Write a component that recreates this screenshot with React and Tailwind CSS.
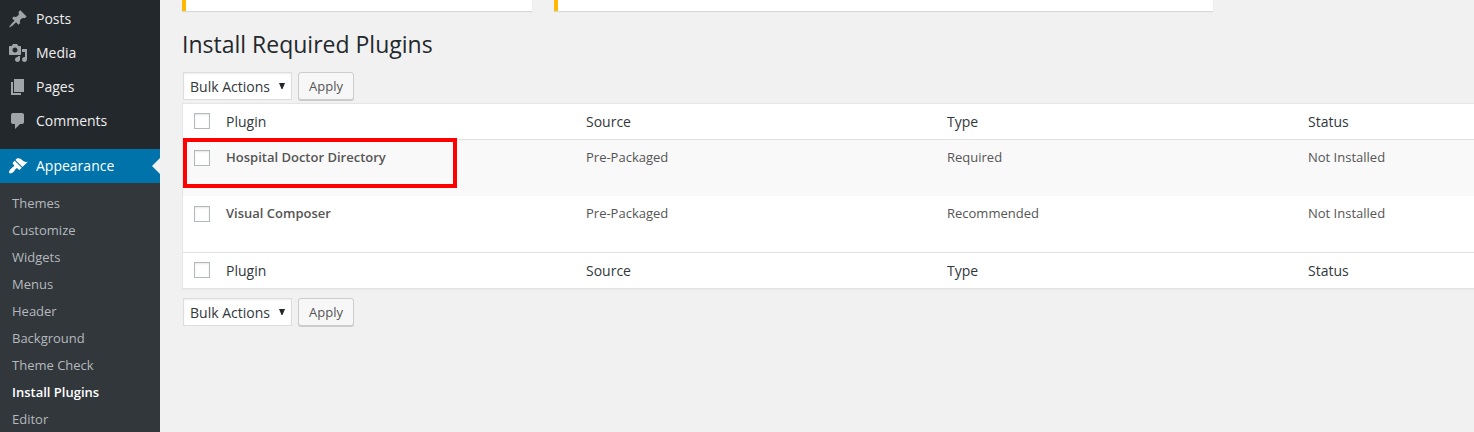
const icons = {
  post: 'M10.44 3.02l1.82-1.82 6.36 6.35-1.83 1.82c-1.05-.68-2.48-.57-3.41.36l-.75.75c-.92.93-1.04 2.35-.35 3.41l-1.83 1.82-2.41-2.41-2.8 2.79c-.42.42-3.38 2.71-3.8 2.29s1.86-3.39 2.28-3.81l2.79-2.79L4.1 9.36l1.83-1.82c1.05.69 2.48.57 3.4-.36l.75-.75c.93-.92 1.05-2.35.36-3.41z',
  media: 'M13 11V4c0-.55-.45-1-1-1h-1.67L9 1H5L3.67 3H2c-.55 0-1 .45-1 1v7c0 .55.45 1 1 1h10c.55 0 1-.45 1-1zM7 4.5c1.38 0 2.5 1.12 2.5 2.5S8.38 9.5 7 9.5 4.5 8.38 4.5 7 5.62 4.5 7 4.5zM14 6h5v10.5c0 1.38-1.12 2.5-2.5 2.5S14 17.88 14 16.5s1.12-2.5 2.5-2.5c.17 0 .34.02.5.05V9h-3V6zm-4 8.05V13h2v3.5c0 1.38-1.12 2.5-2.5 2.5S7 17.88 7 16.5 8.12 14 9.5 14c.17 0 .34.02.5.05z',
  page: 'M6 15V2h10v13H6zm-1 1h8v2H3V5h2v11z',
  comment: 'M5 2h9c1.1 0 2 .9 2 2v7c0 1.1-.9 2-2 2h-2l-5 5v-5H5c-1.1 0-2-.9-2-2V4c0-1.1.9-2 2-2z',
  appearance: 'M14.48 11.06L7.41 3.99l1.5-1.5c.5-.56 2.3-.47 3.51.32 1.21.8 1.43 1.28 2.91 2.1 1.18.64 2.45 1.26 4.45.85zm-.71.71L6.7 4.7 4.93 6.47c-.39.39-.39 1.02 0 1.41l1.06 1.06c.39.39.39 1.03 0 1.42-.6.6-1.43 1.11-2.21 1.69-.35.26-.7.53-1.01.84C1.43 14.23.4 16.08 1.4 17.07c.99 1 2.84-.03 4.18-1.36.31-.31.58-.66.85-1.02.57-.78 1.08-1.61 1.69-2.21.39-.39 1.02-.39 1.41 0l1.06 1.06c.39.39 1.02.39 1.41 0z',
};

const menu = [
  ['post', 'Posts'],
  ['media', 'Media'],
  ['page', 'Pages'],
  ['comment', 'Comments'],
];

const submenu = ['Themes', 'Customize', 'Widgets', 'Menus', 'Header', 'Background', 'Theme Check', 'Install Plugins', 'Editor'];

const plugins = [
  { name: 'Hospital Doctor Directory', source: 'Pre-Packaged', type: 'Required', status: 'Not Installed' },
  { name: 'Visual Composer', source: 'Pre-Packaged', type: 'Recommended', status: 'Not Installed' },
];

function MenuItem({ icon, label, active }) {
  return (
    <a className={active ? 'relative flex h-[34px] items-center gap-2 bg-[#0073aa] pl-2 text-sm text-white' : 'flex h-[34px] items-center gap-2 pl-2 text-sm text-[#eeeeee]'}>
      <svg viewBox="0 0 20 20" className={active ? 'size-5 fill-white' : 'size-5 fill-[#a0a5aa]'}>
        <path d={icons[icon]} />
      </svg>
      <span>{label}</span>
      {active && (
        <span className="absolute top-[9px] right-0 size-0 border-y-8 border-r-8 border-y-transparent border-r-[#f1f1f1]" />
      )}
    </a>
  );
}

function Sidebar() {
  return (
    <nav className="w-40 shrink-0 bg-[#23282d] pt-0.5">
      {menu.map(([icon, label]) => (
        <MenuItem key={label} icon={icon} label={label} />
      ))}
      <div className="h-[11px]" />
      <MenuItem icon="appearance" label="Appearance" active />
      <ul className="bg-[#32373c] pt-[7px]">
        {submenu.map((label) => (
          <li
            key={label}
            className={label === 'Install Plugins' ? 'h-[27px] pl-3 text-[13px] leading-[27px] font-semibold text-white' : 'h-[27px] pl-3 text-[13px] leading-[27px] text-[#b4b9be]'}
          >
            {label}
          </li>
        ))}
      </ul>
    </nav>
  );
}

function BulkActions() {
  return (
    <div className="flex h-7 gap-1.5 pl-px">
      <button className="flex w-[109px] items-center justify-between border border-[#dddddd] bg-white pt-0.5 pr-1.5 pl-[6px] text-sm text-[#32373c] shadow-[inset_0_1px_2px_rgba(0,0,0,0.07)]">
        <span>Bulk Actions</span>
        <svg viewBox="0 0 6 6" className="mb-[3px] size-1.5 fill-[#23282d]">
          <path d="M0 0h6L3.5 6h-1z" />
        </svg>
      </button>
      <button className="w-14 rounded-[3px] border border-[#cccccc] bg-[#f7f7f7] pt-px text-[13px] text-[#555555] shadow-[0_1px_0_#cccccc]">Apply</button>
    </div>
  );
}

function Checkbox() {
  return <span className="block size-4 border border-[#b4b9be] bg-white shadow-[inset_0_1px_2px_rgba(0,0,0,0.1)]" />;
}

const columns = 'grid grid-cols-[43px_360px_361px_361px_1fr]';

function HeadingRow() {
  return (
    <div className={`${columns} h-[35px] text-sm leading-[35px] text-[#32373c]`}>
      <div className="pt-[9px] pl-[11px]">
        <Checkbox />
      </div>
      <div>Plugin</div>
      <div>Source</div>
      <div>Type</div>
      <div>Status</div>
    </div>
  );
}

function PluginRow({ plugin, highlighted }) {
  return (
    <div className={`${columns} relative h-14 pt-2 text-[13px] leading-[19px] text-[#555555] ${highlighted ? 'bg-[#f9f9f9]' : 'bg-white'}`}>
      <div className="pt-0.5 pl-[11px]">
        <Checkbox />
      </div>
      <div className="font-semibold">{plugin.name}</div>
      <div>{plugin.source}</div>
      <div>{plugin.type}</div>
      <div>{plugin.status}</div>
      {highlighted && <span className="absolute -top-0.5 left-0 h-[50px] w-[274px] border-4 border-[#ff0000]" />}
    </div>
  );
}

export default function App() {
  return (
    <div className="flex h-[432px] overflow-hidden bg-[#f1f1f1] font-['Open_Sans',sans-serif]">
      <Sidebar />
      <main className="min-w-0 flex-1 pl-[22px]">
        <div className="flex h-[11px] gap-[22px]">
          <div className="w-[350px] border-l-4 border-[#ffb900] bg-white shadow-[0_1px_1px_rgba(0,0,0,0.1)]" />
          <div className="w-[659px] border-l-4 border-[#ffb900] bg-white shadow-[0_1px_1px_rgba(0,0,0,0.1)]" />
        </div>
        <h1 className="mt-[19px] h-[42px] text-[23px] leading-[29px] text-[#23282d]">Install Required Plugins</h1>
        <BulkActions />
        <section className="mt-[3px] mb-[9px] border border-r-0 border-[#e5e5e5] bg-white shadow-[0_1px_1px_rgba(0,0,0,0.04)]">
          <div className="border-b border-[#e1e1e1]">
            <HeadingRow />
          </div>
          {plugins.map((plugin, index) => (
            <PluginRow key={plugin.name} plugin={plugin} highlighted={index === 0} />
          ))}
          <div className="border-t border-[#e1e1e1]">
            <HeadingRow />
          </div>
        </section>
        <BulkActions />
      </main>
    </div>
  );
}
